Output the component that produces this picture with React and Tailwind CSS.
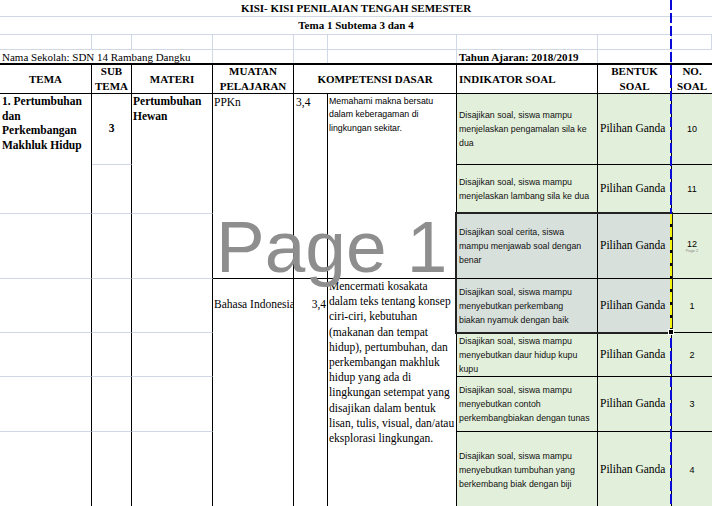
const G = 'border-[#d0d7e5]'
const SANS = "font-['Liberation_Sans',Arial,sans-serif]"

const ROWS = [
  { r: 'row-start-6', no: '10', lines: ['Disajikan soal, siswa mampu', 'menjelaskan pengamalan sila ke', 'dua'] },
  { r: 'row-start-7', no: '11', lines: ['Disajikan soal, siswa mampu', 'menjelaskan lambang sila ke dua'] },
  { r: 'row-start-8', no: '12', sel: true, page: true, lines: ['Disajikan soal cerita, siswa', 'mampu menjawab soal dengan', 'benar'] },
  { r: 'row-start-9', no: '1', sel: true, lines: ['Disajikan soal, siswa mampu', 'menyebutkan perkembang', 'biakan nyamuk dengan baik'] },
  { r: 'row-start-10', no: '2', lines: ['Disajikan soal, siswa mampu', 'menyebutkan daur hidup kupu', 'kupu'] },
  { r: 'row-start-11', no: '3', lines: ['Disajikan soal, siswa mampu', 'menyebutkan contoh', 'perkembangbiakan dengan tunas'] },
  { r: 'row-start-12', no: '4', lines: ['Disajikan soal, siswa mampu', 'menyebutkan tumbuhan yang', 'berkembang biak dengan biji'] },
]

// left columns below the merged blocks: plain gridline cells
const LEFT = ['row-start-8', 'row-start-9', 'row-start-10', 'row-start-11', 'row-start-12']

const KD2 = [
  'Mencermati kosakata', 'dalam teks tentang konsep', 'ciri-ciri, kebutuhan', '(makanan dan tempat',
  'hidup), pertumbuhan, dan', 'perkembangan makhluk', 'hidup yang ada di', 'lingkungan setempat yang',
  'disajikan dalam bentuk', 'lisan, tulis, visual, dan/atau', 'eksplorasi lingkungan.',
]

function Lines({ lines }) {
  return lines.map((l, i) => <div key={i} className="whitespace-nowrap">{l}</div>)
}

export default function App() {
  return (
    <div className="relative w-[712px] h-[506px] overflow-hidden bg-white text-black font-['Liberation_Serif',serif]">
      <div className="grid grid-cols-[92px_40px_81px_81px_34px_129px_141px_74px_40px] grid-rows-[17px_18px_15px_13px_31px_71px_49px_65px_54px_44px_55px_76px]">
        {/* title rows */}
        <div className={`col-span-9 border-b ${G} flex items-end justify-center text-[11px] font-bold leading-none pb-[2px]`}>
          KISI- KISI PENILAIAN TENGAH SEMESTER
        </div>
        <div className={`col-span-9 border-b ${G} flex items-end justify-center text-[11px] font-bold leading-none pb-[3px]`}>
          Tema 1 Subtema 3 dan 4
        </div>
        {[0, 1, 2, 3, 4, 5, 6, 7, 8].map(i => <div key={i} className={`border-r border-b ${G}`} />)}
        <div className={`col-span-3 border-r ${G} text-[11px] leading-none pl-[2px] flex items-end whitespace-nowrap`}>
          Nama Sekolah: SDN 14 Rambang Dangku
        </div>
        <div className={`border-r ${G}`} />
        <div className={`border-r ${G}`} />
        <div className={`border-r ${G}`} />
        <div className={`border-r ${G} text-[11px] font-bold leading-none pl-[2px] flex items-end whitespace-nowrap`}>
          Tahun Ajaran: 2018/2019
        </div>
        <div className={`border-r ${G}`} />
        <div />

        {/* header */}
        <div className="border-t-2 border-r border-b border-black flex items-center justify-center text-[11px] font-bold">TEMA</div>
        <div className="border-t-2 border-r border-b border-black flex items-center justify-center text-center text-[11px] font-bold leading-[15px]">SUB<br />TEMA</div>
        <div className="border-t-2 border-r border-b border-black flex items-center justify-center text-[11px] font-bold">MATERI</div>
        <div className="border-t-2 border-r border-b border-black flex items-center justify-center text-center text-[11px] font-bold leading-[15px]">MUATAN<br />PELAJARAN</div>
        <div className="col-span-2 border-t-2 border-r border-b border-black flex items-center justify-center text-[11px] font-bold">KOMPETENSI DASAR</div>
        <div className="border-t-2 border-r border-b border-black flex items-center pl-[2px] text-[11px] font-bold">INDIKATOR SOAL</div>
        <div className="border-t-2 border-r border-b border-black flex items-center justify-center text-center text-[11px] font-bold leading-[15px]">BENTUK<br />SOAL</div>
        <div className="border-t-2 border-b border-black flex items-center justify-center text-center text-[11px] font-bold leading-[15px]">NO.<br />SOAL</div>

        {/* left merged blocks */}
        <div className={`col-start-1 row-start-6 row-span-2 border-r border-r-black border-b ${G} pl-[2px] text-[11.5px] font-bold leading-[14.7px]`}>
          1. Pertumbuhan<br />dan<br />Perkembangan<br />Makhluk Hidup
        </div>
        <div className={`col-start-2 row-start-6 border-r border-r-black border-b ${G} flex items-center justify-center text-[11.5px] font-bold`}>3</div>
        <div className={`col-start-2 row-start-7 border-r border-r-black border-b ${G}`} />
        <div className={`col-start-3 row-start-6 row-span-2 border-r border-r-black border-b ${G} pl-[1px] text-[11.5px] font-bold leading-[14.7px]`}>
          Pertumbuhan<br />Hewan
        </div>
        {LEFT.map(r => (
          <div key={r} className="contents">
            <div className={`col-start-1 ${r} border-r border-r-black border-b ${G}`} />
            <div className={`col-start-2 ${r} border-r border-r-black border-b ${G}`} />
            <div className={`col-start-3 ${r} border-r border-r-black border-b ${G}`} />
          </div>
        ))}

        {/* PPKn block */}
        <div className="col-start-4 row-start-6 row-span-3 border-r border-b border-black pl-[1px] text-[11.5px] leading-[15px] pt-[1px]">PPKn</div>
        <div className="col-start-5 row-start-6 row-span-3 border-r border-b border-black pl-[2px] text-[11.5px] leading-[15px] pt-[1px]">3,4</div>
        <div className={`col-start-6 row-start-6 row-span-3 border-r border-b border-black pl-[1px] pt-[1px] text-[8.8px] leading-[13.4px] ${SANS}`}>
          <Lines lines={['Memahami makna bersatu', 'dalam keberagaman di', 'lingkungan sekitar.']} />
        </div>

        {/* Bahasa Indonesia block */}
        <div className="col-start-4 row-start-9 row-span-4 border-r border-black pl-[1px] pt-[18px] text-[11.5px] leading-[15px] whitespace-nowrap overflow-hidden">Bahasa Indonesia</div>
        <div className="col-start-5 row-start-9 row-span-4 border-r border-black pr-[1px] pt-[18px] text-right text-[11.5px] leading-[15px]">3,4</div>
        <div className="col-start-6 row-start-9 row-span-4 border-r border-black pl-[1px] text-[11.5px] leading-[15.2px]">
          <Lines lines={KD2} />
        </div>

        {/* indikator / bentuk / nomor */}
        {ROWS.map(row => (
          <div key={row.no} className="contents">
            <div className={`col-start-7 ${row.r} border-r border-b border-black flex flex-col justify-center pl-[2px] text-[8.8px] leading-[14px] text-[#111] ${SANS} ${row.sel ? 'bg-[#d8e0db]' : 'bg-[#e2efda]'}`}>
              <Lines lines={row.lines} />
            </div>
            <div className={`col-start-8 ${row.r} border-r border-b border-black flex items-center pl-[2px] text-[11.5px] ${row.sel ? 'bg-[#d8e0db]' : 'bg-[#e2efda]'}`}>
              Pilihan Ganda
            </div>
            <div className={`col-start-9 ${row.r} border-b border-black bg-[#e2efda] flex flex-col items-center justify-center text-[9px] ${SANS}`}>
              <span className="leading-[10px]">{row.no}</span>
              {row.page && <span className="text-[4px] leading-[4px] text-[#8a8a8a]">Page 2</span>}
            </div>
          </div>
        ))}
      </div>

      {/* page watermark */}
      <div className="absolute left-[216px] top-[210px] text-[73px] leading-none text-[#8e8e8e] font-['Liberation_Sans',Arial,sans-serif] pointer-events-none whitespace-nowrap">
        Page 1
      </div>

      {/* selection */}
      <div className="absolute left-[455px] top-[212px] w-[218px] h-[122px] border-2 border-[#222]" />

      {/* page break line */}
      <svg className="absolute left-[670px] top-0" width="2" height="506">
        <line x1="1" y1="0" x2="1" y2="506" stroke="#0a0ad8" strokeWidth="2" strokeDasharray="10 3" />
      </svg>
      <div className="absolute left-[670px] top-[214px] w-[2px] h-[118px] bg-black">
        <svg width="2" height="118">
          <line x1="1" y1="0" x2="1" y2="118" stroke="#f5f50a" strokeWidth="2" strokeDasharray="10 3" />
        </svg>
      </div>
      <div className="absolute left-[668px] top-[329px] w-[6px] h-[6px] bg-black border border-white" />
    </div>
  )
}
